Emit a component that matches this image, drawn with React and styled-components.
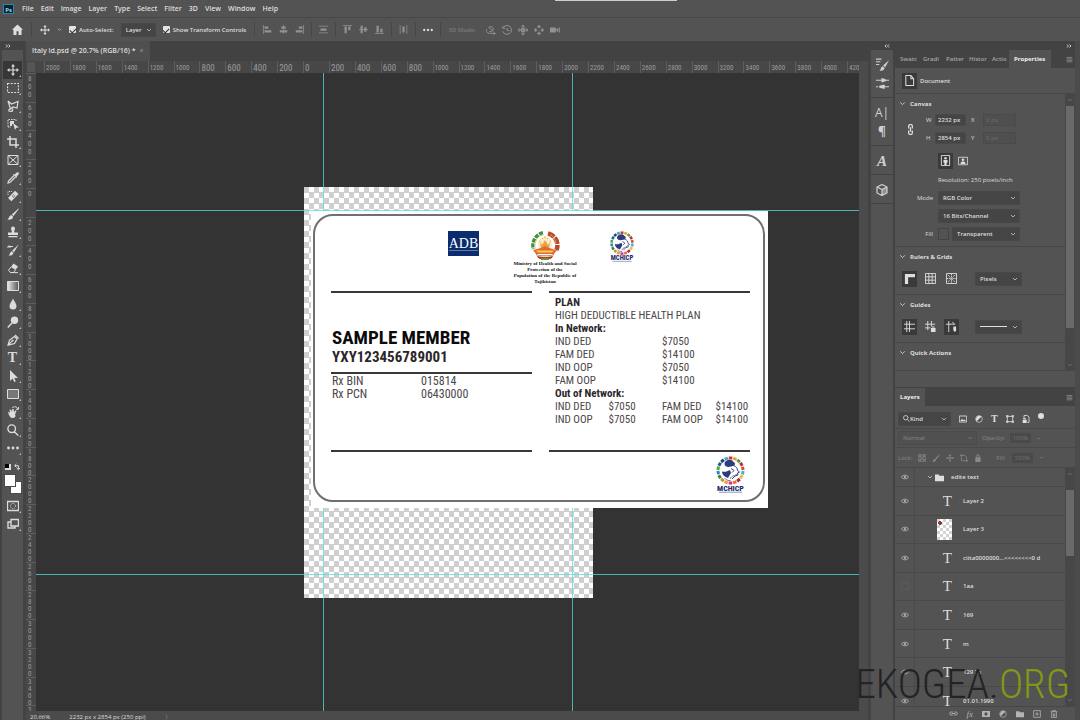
import React from 'react';
import styled, { createGlobalStyle } from 'styled-components';

const ui = '"Open Sans", "Noto Sans", sans-serif';
const narrow = '"Roboto Condensed", "Liberation Sans Narrow", "Liberation Sans", sans-serif';

const GlobalStyle = createGlobalStyle`
  * { box-sizing: border-box; }
  body {
    margin: 0;
    background: #535353;
    color: #dedede;
    font-family: ${ui};
    font-size: 7px;
    line-height: 10px;
  }
  button, input, select { font: inherit; color: inherit; margin: 0; padding: 0; border: 0; background: none; }
`;

/* ---------- icons ---------- */

const stroke = { fill: 'none', stroke: 'currentColor', strokeWidth: 1 };

const shapes = {
  home: <path d="M6 .5 0 6.2h1.6V12h3.3V8h2.2v4h3.3V6.2H12z" fill="currentColor" />,
  move: <path d="M6 0 8 2.5H6.6v2.9h2.9V4L12 6 9.5 8V6.6H6.6v2.9H8L6 12 4 9.500h1.400V6.600H2.500V8L0 6l2.500-2v1.400h2.900V2.500H4z" fill="currentColor" />,
  chevron: <path d="M2 4l4 4 4-4" {...stroke} strokeWidth="1.4" />,
  marquee: <path d="M.5 1.500h11v9H.5z" {...stroke} strokeWidth="1.200" strokeDasharray="2 1.200" />,
  lasso: <path d="M1 1l3.500 3L11 1.500 10 8 6 7 3.500 9 1 1m2.500 8L2 9.500 2 11l3 .5 1-3" {...stroke} strokeWidth="1.200" />,
  objectSelect: <g><path d="M1 8.500V1.500h8V4M1 9h3" {...stroke} strokeDasharray="1.500 1" /><path d="M3 3h4v3H5v2H3zM6 5l6 4.500-2.800.3L8 12z" fill="currentColor" /></g>,
  crop: <path d="M3 0v9h9M0 3h9v9" {...stroke} strokeWidth="1.500" />,
  frame: <path d="M1 1.500h10v9H1zM1 1.500l10 9M11 1.500l-10 9" {...stroke} />,
  pipette: <g><path d="M7 3.500 1.500 9 1 11l2-.5L8.500 5" {...stroke} strokeWidth="1.200" /><path d="M6 2.500 7 2l1 .5C9 .5 10.500-.2 11.500.6c.9 1 .2 2.400-1.800 3.400l.4 1-.6.8z" fill="currentColor" /></g>,
  heal: <g><path d="M8 .8 11.500 4 4.500 11.300 1 8z" fill="currentColor" /><path d="M1 5V1.500h4" {...stroke} strokeDasharray="1.200 1" /><path d="M5 6h.9M6.300 5h.9M6 7.200h.9M7.300 6.200h.9" stroke="#535353" /></g>,
  brush: <path d="M11.800.2 11.800 1 6.500 8 4.800 6.500zM4.200 7l2 1.700C6 11 3.500 12 .3 11.500 2.200 10.500 1.800 8 4.200 7z" fill="currentColor" />,
  stamp: <path d="M4 2.500a2 2 0 0 1 4 0C8 4 7 4.500 7.200 6.500H11V9H1V6.500h3.800C5 4.500 4 4 4 2.500zM1.500 10h9v1.300h-9z" fill="currentColor" />,
  history: <g><path d="M11.800.2 7 8.300 5.200 6.800zM4.700 7.200l1.800 1.600C6 11 4 12 1.500 11.300c2-1 1-3 3.200-4.100z" fill="currentColor" /><path d="M.5 3.500 2 2l1.500 1.500M2 2.500h4" {...stroke} strokeWidth="1.200" /></g>,
  eraser: <g><path d="M6.500 1.500 11 4.500 8.500 8 4 5z" fill="currentColor" /><path d="M4 5 1.500 8.200 3.500 10.500h3L8.500 8M3 10.600h8" {...stroke} /></g>,
  gradient: <g><linearGradient id="toolGradient"><stop stopColor="#ededed" /><stop offset="1" stopColor="#555" /></linearGradient><path d="M.5 1.500h11v9H.5z" fill="url(#toolGradient)" stroke="currentColor" /></g>,
  drop: <path d="M6 .5C7 3 9.500 5.500 9.500 8a3.500 3.500 0 0 1-7 0C2.500 5.500 5 3 6 .5z" fill="currentColor" />,
  dodge: <g><circle cx="7.500" cy="4.300" r="3.700" fill="currentColor" /><path d="M5 7 .8 11.400" {...stroke} strokeWidth="1.500" /></g>,
  pen: <g><path d="M1 11.200 2.500 6 7.500 2.500 10 5 7.500 9.500zM1 11.200l4-4" {...stroke} strokeWidth="1.200" /><circle cx="5.700" cy="6.500" r="1" fill="currentColor" /><path d="M8 1l3.500 3.500" {...stroke} strokeWidth="1.500" /></g>,
  pointer: <path d="M3 0v11l2.600-2.500L7.200 12l1.600-.8L7.300 8H11z" fill="currentColor" />,
  rect: <path d="M.5 1.500h11v9H.5z" stroke="currentColor" fill="#777" />,
  hand: <g><path d="M1 6 3 6.500 2.500 4l1.500-.5 1 2.500.3-3 1.500.2.200 3 1.500-2 1 .8-1.500 3.500C9.500 10.500 7.500 12 5.500 12S2 10 1 6z" fill="currentColor" /><path d="M5 2C7 0 10 .5 11 3M11.500 1v2.300H9" {...stroke} /></g>,
  zoom: <path d="M8.500 4.700a3.800 3.800 0 1 1-7.600 0 3.800 3.800 0 0 1 7.600 0zM7.300 7.700 11.300 11.500" {...stroke} strokeWidth="1.400" />,
  dots: <g fill="currentColor"><circle cx="1.500" cy="6" r="1.400" /><circle cx="6" cy="6" r="1.400" /><circle cx="10.500" cy="6" r="1.400" /></g>,
  quickMask: <g><path d="M.5 1.500h11v9H.5z" {...stroke} strokeWidth="1.300" /><circle cx="6" cy="6" r="2.500" {...stroke} strokeDasharray="1 1" /></g>,
  screen: <path d="M4 1.500h7.500V8H4zM4 4H1v6h7V8" {...stroke} strokeWidth="1.400" />,
  alignLeft: <path d="M0 0h1v12H0zM2 2h5v3H2zM2 7h9v3H2z" fill="currentColor" />,
  alignCenter: <path d="M5.500 0h1v12h-1zM3 2h6v3H3zM1 7h10v3H1z" fill="currentColor" />,
  alignRight: <path d="M11 0h1v12h-1zM5 2h5v3H5zM1 7h9v3H1z" fill="currentColor" />,
  distribute: <path d="M0 1h12v1H0zM2 4.500h8v3H2zM0 10h12v1H0z" fill="currentColor" />,
  alignTop: <path d="M0 0h12v1H0zM2 2h3v9H2zM7 2h3v5H7z" fill="currentColor" />,
  alignMiddle: <path d="M0 5.500h12v1H0zM2 1h3v10H2zM7 3h3v6H7z" fill="currentColor" />,
  alignBottom: <path d="M0 11h12v1H0zM2 1h3v9H2zM7 5h3v5H7z" fill="currentColor" />,
  distributeH: <path d="M1 0h1v12H1zM4.500 2h3v8h-3zM10 0h1v12h-1z" fill="currentColor" />,
  orbit: <path d="M3 4a3 3 0 1 1 5 3L4 8M1 5c-2 3 1 5 4 5h6M9 8l2 2-2 2M4 3l4 4" {...stroke} strokeWidth="1.200" />,
  roll: <path d="M2 2.500a5.300 5.300 0 1 1-1 5M1 1v3h3M6 3.500v3h3" {...stroke} strokeWidth="1.200" />,
  pan: <path d="M6 0v12M0 6h12M4 2l2-2 2 2M4 10l2 2 2-2M2 4 0 6l2 2M10 4l2 2-2 2M4 4h4v4H4z" {...stroke} strokeWidth="1.200" />,
  slide: <path d="M6 4V0M6 12V8M0 6h4M8 6h4M4 2h4M4 10h4M2 4v4M10 4v4" {...stroke} strokeWidth="1.500" />,
  camera: <path d="M0 3h7v6H0zM7 6l3-3v6zM11 3h1v6h-1z" fill="currentColor" />,
  brushes: <g><path d="M0 1h5M0 3.500h4M0 6h3" {...stroke} /><path d="M12 2 8.500 8.500 6.500 7zM6 7.500 8 9c-.5 2.500-2 3-5 2.500C5 10.500 4 8.500 6 7.500z" fill="currentColor" /></g>,
  brushSettings: <path d="M0 2.500h5V1l4 1v2L5 5V3.500H0zM9 2.500h3v1H9zM12 8.500H8V7L3 8v2l5 1V9.500h4zM0 8.500h2v1H0z" fill="currentColor" />,
  cube: <g><path d="M6 .5 11 3v6L6 11.500 1 9V3zM1 3l5 2.500L11 3M6 5.500v6" {...stroke} strokeWidth="1.200" /><path d="M6 5.500 11 3v6l-5 2.500z" fill="currentColor" opacity=".5" /></g>,
  page: <path d="M2 .5h5.500L10.500 4v7.500H2zM7.500.5V4h3" {...stroke} strokeWidth="1.100" />,
  link: <path d="M4 5V2.500a2 2 0 0 1 4 0V5M4 7v2.500a2 2 0 0 0 4 0V7M6 3.500v5" {...stroke} strokeWidth="1.400" />,
  portrait: <g><path d="M1.500.5h9v11h-9z" {...stroke} /><circle cx="6" cy="3.500" r="1.400" fill="currentColor" /><path d="M3.800 5.500h4.400v3H7.200V11H4.800V8.500h-1z" fill="currentColor" /></g>,
  landscape: <g><path d="M.5 1.500h11v9H.5z" {...stroke} /><circle cx="6" cy="4.500" r="1.600" fill="currentColor" /><path d="M3 9.500C3 7 4.500 6.500 6 6.500s3 .5 3 3z" fill="currentColor" /></g>,
  ruler: <path d="M1 1h11v3.500H4.500V12H1z" fill="currentColor" />,
  grid: <path d="M.5.5h11v11H.5zM4.200.5v11M7.800.5v11M.5 4.200h11M.5 7.800h11" {...stroke} />,
  pixelGrid: <g><path d="M.5.5h11v11H.5z" {...stroke} /><path d="M2 2l8 8M10 2 2 10M6 1v10M1 6h10" {...stroke} strokeDasharray="1.500 .8" /></g>,
  guides: <path d="M3 0v12M6 0v12M0 3.500h12M0 8.500h12" {...stroke} />,
  guideLock: <g><path d="M3 0v10M7 0v6M0 3.500h11M0 7.500h6" {...stroke} /><path d="M6.500 7.500h5V12h-5zM7.500 7V6h3v1z" fill="currentColor" /></g>,
  guideSmart: <g><path d="M3 0v12M0 3.500h10M7 1l2 2.500" {...stroke} /><path d="M8 6h3v5l-1.500 1L8 10z" fill="currentColor" /></g>,
  image: <g><path d="M.5 1.500h11v9H.5z" {...stroke} strokeWidth="1.300" /><path d="M2 9l2.500-3.500L6.500 8 8 6.500 10 9z" fill="currentColor" /></g>,
  adjust: <g><circle cx="6" cy="6" r="5" {...stroke} /><path d="M9.500 2.500A5 5 0 0 0 2.500 9.500z" fill="currentColor" /></g>,
  shape: <path d="M2 2h8v8H2zM.5.5h2.500V3H.5zM9 .5h2.500V3H9zM.5 9h2.500v2.500H.5zM9 9h2.500v2.500H9z" {...stroke} strokeWidth="1.200" />,
  smart: <g><path d="M3 6V.8h5L10.500 3v8H8" {...stroke} strokeWidth="1.300" /><path d="M1 7h6v5H1zM2 6.500V5h4v1.500z" fill="currentColor" /></g>,
  checker: <g><path d="M.5.5h11v11H.5z" {...stroke} /><path d="M2 2h2.700v2.700H2zM7 2h3v2.700H7zM4.700 4.700H7V7H4.700zM2 7h2.700v3H2zM7 7h3v3H7z" fill="currentColor" /></g>,
  artboard: <path d="M2 0v10h10M0 2h7l3 3v7" {...stroke} strokeWidth="1.200" />,
  lock: <path d="M2 5h1.500V3a2.500 2.500 0 0 1 5 0v2H10v7H2zM4.800 5h2.400V3a1.200 1.200 0 0 0-2.400 0z" fill="currentColor" />,
  eye: <g><path d="M.5 6C3 2.300 9 2.300 11.500 6 9 9.700 3 9.700.5 6z" {...stroke} strokeWidth="1.400" /><circle cx="6" cy="6" r="1.800" fill="currentColor" /></g>,
  eyeOff: <path d="M.5.5h11v11H.5z" {...stroke} opacity=".2" />,
  folder: <path d="M0 2h5l1 1.500h6V11H0z" fill="currentColor" />,
  menu: <path d="M1 2.500h10M1 5h10M1 7.500h10M1 10h10" {...stroke} />,
  mask: <g><path d="M0 1.500h12v9H0z" fill="currentColor" /><circle cx="6" cy="6" r="2.500" fill="#535353" /></g>,
  add: <path d="M1 1h10v10H1zM6 3.500v5M3.500 6h5" {...stroke} strokeWidth="1.200" />,
  trash: <path d="M1 2.500h10M4 2.500V1h4v1.500M2.500 3v8.500h7V3M5 5v5M7 5v5" {...stroke} strokeWidth="1.200" />,
  chain: <path d="M5 8H3a2 2 0 0 1 0-4h2M7 4h2a2 2 0 0 1 0 4H7M3.500 6h5" {...stroke} strokeWidth="1.200" />,
  swap: <path d="M3 4h5v5M5 1.500 2.500 4 5 6.500M5.500 7.500 8 10l2.500-2.500" {...stroke} strokeWidth="1.500" />,
  collapse: <path d="M5 3 2 6l3 3M10 3 7 6l3 3" {...stroke} strokeWidth="1.800" />,
  expand: <path d="M2 3l3 3-3 3M7 3l3 3-3 3" {...stroke} strokeWidth="1.800" />,
};

const Svg = styled.svg`
  display: block;
  flex: none;
  width: ${(p) => p.$size}px;
  height: ${(p) => p.$size}px;
`;

const Icon = ({ name, size = 10 }) => (
  <Svg $size={size} viewBox="0 0 12 12" aria-hidden="true">{shapes[name]}</Svg>
);

const Glyph = styled.span`
  font-family: ${(p) => (p.$sans ? ui : '"Liberation Serif", serif')};
  font-style: ${(p) => (p.$italic ? 'italic' : 'normal')};
  font-weight: ${(p) => (p.$bold ? 700 : 400)};
  font-size: ${(p) => p.$size || 14}px;
  line-height: 14px;
`;

/* ---------- frame of the program ---------- */

const Page = styled.div`
  position: relative;
  display: flex;
  flex-direction: column;
  height: 100vh;
  overflow: hidden;
  background: #535353;
`;

const MenuBar = styled.nav`
  display: flex;
  align-items: center;
  gap: 7px;
  height: 18px;
  padding: 0 3px;
  border-bottom: 1px solid #474747;
`;

const MenuItem = styled.button`
  font-size: 7px;
  font-weight: 600;
`;

const PsBadge = styled.span`
  display: grid;
  place-items: center;
  width: 11px;
  height: 10px;
  margin-right: 1px;
  border: 1px solid #2f86ad;
  background: #07202e;
  color: #9bd8f5;
  font-size: 6px;
  font-weight: 700;
`;

const DragHandle = styled.div`
  position: absolute;
  top: 0;
  left: 555px;
  width: 122px;
  height: 1px;
  background: #c8d0cf;
`;

const OptionsBar = styled.div`
  display: flex;
  align-items: center;
  gap: 7px;
  height: 23px;
  padding-left: 12px;
`;

const Group = styled.div`
  display: flex;
  align-items: center;
  gap: ${(p) => p.$gap || 6}px;
  color: ${(p) => (p.$dim ? '#929292' : 'inherit')};
`;

const ModeLabel = styled.span`
  margin-right: 4px;
  color: #7a7a7a;
  font-size: 6px;
  font-weight: 600;
`;

const Divider = styled.i`
  width: 1px;
  height: 15px;
  margin: 0 ${(p) => p.$space || 0}px;
  background: #474747;
`;

const Check = styled.label`
  display: flex;
  align-items: center;
  gap: 3px;
  font-size: 6px;
  font-weight: 600;
  white-space: nowrap;

  input {
    appearance: none;
    display: grid;
    place-items: center;
    width: 7px;
    height: 7px;
    border-radius: 1px;
    background: #e4e4e4;
  }
  input:checked::after {
    content: '';
    width: 5px;
    height: 3px;
    border: solid #333;
    border-width: 0 0 1px 1px;
    transform: rotate(-45deg);
  }
`;

const SelectBox = styled.span`
  display: inline-flex;
  align-items: center;
  width: ${(p) => p.$width}px;
  height: 14px;
  padding: 0 3px 0 4px;
  border: 1px solid ${(p) => (p.$dim ? '#4c4c4c' : '#484848')};
  background: ${(p) => (p.$dim ? '#505050' : '#454545')};
  color: ${(p) => (p.$dim ? '#7c7c7c' : '#dedede')};
  font-size: 6px;
  font-weight: 600;

  select {
    appearance: none;
    flex: 1;
    min-width: 0;
    line-height: 10px;
    outline: 0;
  }
`;

const Select = ({ label, value, width, dim, before, id }) => (
  <SelectBox $width={width} $dim={dim}>
    {before}
    <select aria-label={label} id={id} defaultValue={value}>
      <option>{value}</option>
    </select>
    <Icon name="chevron" size={6} />
  </SelectBox>
);

const Main = styled.div`
  display: grid;
  grid-template-columns: 26px minmax(0, 1fr) 24px 185px;
  flex: 1;
  min-height: 0;
`;

/* ---------- tools ---------- */

const Tools = styled.aside`
  display: flex;
  flex-direction: column;
  align-items: center;
  border: solid #434343;
  border-width: 0 3px 0 2px;
  color: #dcdcdc;
`;

const PanelCap = styled.div`
  display: flex;
  align-items: center;
  align-self: stretch;
  justify-content: ${(p) => p.$align || 'flex-start'};
  height: 9px;
  padding: 0 3px;
  background: #424242;
`;

const ToolList = styled.div`
  display: grid;
  grid-auto-rows: 18px;
  padding-top: 11px;
`;

const Tool = styled.button`
  position: relative;
  display: grid;
  place-items: center;
  width: 19px;
  min-height: 18px;
  background: ${(p) => (p.$active ? '#373737' : 'transparent')};

  &::after {
    content: '';
    position: absolute;
    right: 1px;
    bottom: 2px;
    border: 1px solid;
    border-color: transparent #bbb #bbb transparent;
  }
`;

const Swatches = styled.div`
  display: grid;
  grid-template-columns: 9px 9px;
  place-items: center;
  row-gap: 3px;
  padding: 6px 0 3px;
`;

const SwatchPair = styled.div`
  position: relative;
  grid-column: span 2;
  width: 18px;
  height: 20px;
`;

const Swatch = styled.button`
  position: absolute;
  top: ${(p) => (p.$back ? 7 : 0)}px;
  left: ${(p) => (p.$back ? 6 : 0)}px;
  width: 12px;
  height: 13px;
  border: 1px solid #4b4b4b;
  background: #fff;
`;

const MiniSwatch = styled.i`
  width: 6px;
  height: 6px;
  border: solid #ddd;
  border-width: 0 2px 2px 0;
  background: #000;
`;

const tools = [
  'move', 'marquee', 'lasso', 'objectSelect', 'crop', 'frame', 'pipette', 'heal', 'brush', 'stamp', 'history',
  'eraser', 'gradient', 'drop', 'dodge', 'pen', 'type', 'pointer', 'rect', 'hand', 'zoom', 'dots',
];

const ToolBar = () => (
  <Tools>
    <PanelCap><Icon name="expand" size={6} /></PanelCap>
    <ToolList>
      {tools.map((name) => (
        <Tool key={name} aria-label={name} $active={name === 'move'}>
          {name === 'type' ? <Glyph $bold>T</Glyph> : <Icon name={name} size={12} />}
        </Tool>
      ))}
    </ToolList>
    <Swatches>
      <MiniSwatch />
      <Icon name="swap" size={8} />
      <SwatchPair>
        <Swatch $back aria-label="Background colour" />
        <Swatch aria-label="Foreground colour" />
      </SwatchPair>
    </Swatches>
    <Tool aria-label="Quick mask"><Icon name="quickMask" size={12} /></Tool>
    <Tool aria-label="Screen mode"><Icon name="screen" size={12} /></Tool>
  </Tools>
);

/* ---------- document window ---------- */

const DocumentArea = styled.main`
  display: flex;
  flex-direction: column;
  min-width: 0;
  min-height: 0;
  border-right: 3px solid #434343;
  background: #4b4b4b;
`;

const TabBar = styled.div`
  display: flex;
  height: 20px;
  background: #424242;
`;

const DocTab = styled.button`
  display: flex;
  align-items: center;
  gap: 4px;
  padding: 0 6px;
  background: #4f4f4f;
  font-size: 7px;
  font-weight: 600;
  white-space: nowrap;

  span { color: #8d8d8d; }
`;

const Workspace = styled.div`
  display: grid;
  grid-template: 12px minmax(0, 1fr) / 10px minmax(0, 1fr) 9px;
  flex: 1;
  min-height: 0;
`;

const RulerCorner = styled.div`
  border: 1px solid #444;
  background: #555;
`;

const RulerX = styled.div`
  overflow: hidden;
  padding-left: 8px;
  background: #474747;
`;

const RulerXTrack = styled.div`
  display: grid;
  grid-template-columns: repeat(32, 1fr);
  height: 12px;
  margin-right: -14px;
`;

const MarkX = styled.span`
  min-width: 0;
  padding: 2px 0 0 1px;
  border-left: 1px solid #5d5d5d;
  color: #9c9c9c;
  font-family: ${narrow};
  font-size: ${(p) => (p.$wide ? 7 : 9)}px;
`;

const RulerY = styled.div`
  overflow: hidden;
  background: #474747;
`;

const RulerYTrack = styled.div`
  display: grid;
  grid-template-rows: repeat(23, 1fr);
  height: calc(100% + 23px);
`;

const MarkY = styled.span`
  min-height: 0;
  padding: 1px 5px 0 2px;
  border-top: 1px solid #5d5d5d;
  color: #9c9c9c;
  font-family: ${narrow};
  font-size: 7px;
  line-height: ${(p) => (p.$wide ? 7 : 8)}px;
  word-break: break-all;
`;

const Canvas = styled.div`
  position: relative;
  overflow: hidden;
  background: #333;
`;

const Artboard = styled.div`
  position: absolute;
  left: 268px;
  top: 114px;
  width: 289px;
  height: 411px;
  background: repeating-conic-gradient(#fff 0 25%, #cfcfcf 0 50%) 0 0 / 10px 11px;
`;

const GuideV = styled.i`
  position: absolute;
  top: 0;
  bottom: 0;
  left: ${(p) => p.$at}px;
  width: 1px;
  background: rgba(80, 226, 222, 0.75);
`;

const GuideH = styled.i`
  position: absolute;
  left: 0;
  right: 0;
  top: ${(p) => p.$at}px;
  height: 1px;
  background: rgba(80, 226, 222, 0.75);
`;

const StatusBar = styled.footer`
  display: flex;
  gap: 19px;
  height: 9px;
  padding: 1px 4px 0;
  overflow: hidden;
  background: #4b4b4b;
  font-size: 6px;
  white-space: nowrap;
`;

const marksX = Array.from({ length: 32 }, (_, i) => Math.abs(i - 10) * 200);
const marksY = Array.from({ length: 23 }, (_, i) => Math.abs(i - 4) * 200);

/* ---------- the member card ---------- */

const CardSheet = styled.article`
  position: absolute;
  left: 275px;
  top: 138px;
  width: 457px;
  padding: 3px 3px 6px 2px;
  background: #fff;
  color: #2b2629;
  font-family: ${narrow};
`;

const CardFrame = styled.div`
  display: flex;
  flex-direction: column;
  min-height: 288px;
  padding: 0 13px 0 16px;
  border: 2px solid #6f6f6f;
  border-radius: 20px;
`;

const LogoRow = styled.header`
  display: flex;
  align-items: flex-start;
  height: 75px;
  padding: 15px 0 0 117px;
`;

const Ministry = styled.div`
  display: flex;
  flex-direction: column;
  align-items: center;
  width: 68px;
  margin: 0 30px 0 32px;
  color: #111;
  font-family: "Liberation Serif", serif;
  font-size: 5px;
  font-weight: 700;
  line-height: 6px;
  text-align: center;
  white-space: nowrap;

  p { margin: 0; }
`;

const Logo = styled.svg`
  display: block;
  width: ${(p) => p.$width}px;
  height: ${(p) => p.$height}px;
`;

const CardColumns = styled.div`
  display: grid;
  grid-template-columns: repeat(2, minmax(0, 1fr));
  gap: 17px;
`;

const CardColumn = styled.section`
  height: 161px;
  border: solid #3b383a;
  border-width: 2px 0;
`;

const MemberBox = styled.div`
  height: 81px;
  padding: 35px 0 0 1px;
  border-bottom: 2px solid #3b383a;
`;

const MemberName = styled.h2`
  margin: 0;
  color: #0c0a0b;
  font-size: 19px;
  line-height: 20px;
`;

const MemberId = styled.p`
  margin: 0;
  font-size: 15px;
  font-weight: 700;
  line-height: 18px;
`;

const RxBox = styled.div`
  padding: 1px 0 0 1px;
  font-size: 12px;
`;

const DataTable = styled.table`
  width: ${(p) => p.$width}px;
  border-collapse: collapse;
  table-layout: fixed;
  color: #4b474a;
  font-size: inherit;
  line-height: 13px;

  th, td {
    padding: 0;
    font-weight: 400;
    text-align: left;
    white-space: nowrap;
  }
`;

const PlanBox = styled.div`
  padding: 3px 0 0 6px;
  color: #4b474a;
  font-size: 11px;
  line-height: 13px;

  h3 { margin: 0; color: #2b2629; font-size: 11px; line-height: 13px; }
  p { margin: 0; white-space: nowrap; }
`;

const CardFoot = styled.footer`
  display: flex;
  justify-content: flex-end;
  padding: 4px 4px 0;
`;

const Table = ({ rows, width }) => (
  <DataTable $width={width}>
    <tbody>
      {rows.map((row) => (
        <tr key={row[0]}>
          {row.map((cell, i) => (i % 2 ? <td key={i}>{cell}</td> : <th key={i} scope="row">{cell}</th>))}
        </tr>
      ))}
    </tbody>
  </DataTable>
);

const AdbLogo = () => (
  <Logo $width={31} $height={25} viewBox="0 0 31 25" role="img" aria-label="ADB">
    <rect width="31" height="25" fill="#0c2d6d" />
    <text x="15.500" y="17" fill="#fff" fontFamily="Liberation Serif, serif" fontSize="14" textAnchor="middle">ADB</text>
    <path d="M1 19.500h29" stroke="#9fb0d2" strokeWidth=".6" />
  </Logo>
);

const Emblem = () => (
  <Logo $width={30} $height={30} viewBox="0 0 30 30" aria-hidden="true">
    <path d="M13 2A12 13 0 0 0 3.500 18" fill="none" stroke="#3f9142" strokeWidth="4" strokeDasharray="4 1" />
    <path d="M13 3.500A12 12 0 0 0 5 18" fill="none" stroke="#ead9a0" strokeWidth="1" />
    <path d="M18 2.500A12 12 0 0 1 26.500 19" fill="none" stroke="#b8482a" strokeWidth="4.500" strokeDasharray="7 1" />
    <path d="M20 3.500A11 11 0 0 1 26 13" fill="none" stroke="#dd9b4b" strokeWidth="1" />
    <circle cx="15" cy="13" r="7" fill="#faecc0" />
    <path d="M10 11l2 3 3-5 3 5 2-3-1 6h-8z" fill="#e9a24c" />
    <path d="M12 7l1 1M15 5v2M18 7l-1 1M9 10l1 .5M21 10l-1 .5" stroke="#e5a52a" />
    <path d="M3 19c4-1 6-1 12-4 6 3 8 3 12 4l-3 4H6z" fill="#e26a2c" />
    <path d="M6 19.500h18l-2 2H8z" fill="#f1cd59" />
    <path d="M6 23c5 2 13 2 18 0l-2 4c-4 2-10 2-14 0z" fill="#a83a23" />
    <path d="M7 24.500c5 1.500 11 1.500 16 0" fill="none" stroke="#eed9b0" />
    <path d="M11 27h8v2h-8z" fill="#6b943c" />
  </Logo>
);

const wheel = ['#c93a35', '#ef9a36', '#4f9f46', '#c5263a', '#e5452b', '#37b4dc', '#f2bb2c', '#a8243f', '#ee6c2c', '#de2f86', '#f39c2e', '#c4923a', '#3f7f49', '#2686bd', '#57a447', '#17608f', '#1c4770', '#4aa4c9'];

const ChildLogo = ({ width, height }) => (
  <Logo $width={width} $height={height} viewBox="0 0 31 37" role="img" aria-label="MCHICP">
    {wheel.map((fill, i) => (
      <rect key={i} x="13.800" y=".5" width="3.500" height="3" fill={fill} transform={`rotate(${i * 20} 15.500 14.500)`} />
    ))}
    <path d="M9.500 8c0-4 7-6 9-2 2 .5 2 3 0 4l-5 1c-2-.2-4-1-4-3z" fill="#2f3b7f" />
    <path d="M7 15.500c2 .5 4 .5 8-1.500l1 3-3 5c-3-1-6-3-6-6.500z" fill="#2f3b7f" />
    <path d="M18.500 9.500c3 1 4 3 4 5l2 1.500-2 1 .5 2-3 1-3 3M16 12.500l3 2-2 2" fill="none" stroke="#34407f" strokeWidth="1" />
    <path d="M15 23c2-4 5-3 7-5M9.500 22c1.500 2 4 3 6 2.500" fill="none" stroke="#5a649a" strokeWidth=".9" />
    <text x="15.500" y="34.500" fill="#1e2b6d" fontFamily="Roboto Condensed, Liberation Sans, sans-serif" fontSize="8" fontWeight="800" textAnchor="middle">MCHICP</text>
    <path d="M4 36.200h23" stroke="#5a649a" strokeWidth=".7" />
  </Logo>
);

const MemberCard = () => (
  <CardSheet>
    <CardFrame>
      <LogoRow>
        <AdbLogo />
        <Ministry>
          <Emblem />
          <p>
            Ministry of Health and Social<br />
            Protection of the<br />
            Population of the Republic of<br />
            Tajikistan
          </p>
        </Ministry>
        <ChildLogo width={26} height={31} />
      </LogoRow>
      <CardColumns>
        <CardColumn>
          <MemberBox>
            <MemberName>SAMPLE MEMBER</MemberName>
            <MemberId>YXY123456789001</MemberId>
          </MemberBox>
          <RxBox>
            <Table width={178} rows={[['Rx BIN', '015814'], ['Rx PCN', '06430000']]} />
          </RxBox>
        </CardColumn>
        <CardColumn>
          <PlanBox>
            <h3>PLAN</h3>
            <p>HIGH DEDUCTIBLE HEALTH PLAN</p>
            <h3>In Network:</h3>
            <Table
              width={214}
              rows={[['IND DED', '$7050'], ['FAM DED', '$14100'], ['IND OOP', '$7050'], ['FAM OOP', '$14100']]}
            />
            <h3>Out of Network:</h3>
            <Table
              width={214}
              rows={[['IND DED', '$7050', 'FAM DED', '$14100'], ['IND OOP', '$7050', 'FAM OOP', '$14100']]}
            />
          </PlanBox>
        </CardColumn>
      </CardColumns>
      <CardFoot><ChildLogo width={31} height={37} /></CardFoot>
    </CardFrame>
  </CardSheet>
);

/* ---------- right side ---------- */

const Dock = styled.aside`
  display: flex;
  flex-direction: column;
  border-right: 2px solid #434343;
`;

const DockGroup = styled.div`
  display: grid;
  grid-auto-rows: 19px;
  place-items: center;
  padding: 5px 0 4px;
  border-bottom: 1px solid #434343;
  color: #d0d0d0;
`;

const Panels = styled.aside`
  display: flex;
  flex-direction: column;
  min-height: 0;
  border-right: 5px solid #4b4b4b;
`;

const PanelTabs = styled.div`
  display: flex;
  align-items: stretch;
  height: 18px;
  padding-right: 2px;
  background: #434343;
  color: #a5a5a5;
  font-size: 6px;
  font-weight: 600;

  svg { margin: auto 0 auto auto; }
`;

const PanelTab = styled.button`
  overflow: hidden;
  width: ${(p) => p.$width}px;
  padding: 0 5px;
  background: ${(p) => (p.$active ? '#535353' : 'transparent')};
  color: ${(p) => (p.$active ? '#f0f0f0' : 'inherit')};
  font-weight: ${(p) => (p.$active ? 700 : 600)};
  text-align: left;
`;

const DocumentRow = styled.div`
  display: flex;
  align-items: center;
  gap: 3px;
  height: 26px;
  padding-left: 7px;
  border-bottom: 1px solid #464646;
  font-size: 6px;
  font-weight: 600;
`;

const ToggleButton = styled.button`
  display: grid;
  place-items: center;
  width: 15px;
  height: 16px;
  background: ${(p) => (p.$on ? '#3a3a3a' : 'transparent')};
`;

const Scroller = styled.div`
  display: grid;
  grid-template-columns: minmax(0, 1fr) 10px;
  flex: ${(p) => (p.$grow ? '1' : 'none')};
  min-height: 0;
`;

const ScrollBar = styled.div`
  display: flex;
  flex-direction: column;
  align-items: center;
  justify-content: space-between;
  padding: 3px 1px;
  background: #474747;
  color: #777;

  i {
    width: 8px;
    height: ${(p) => p.$thumb}px;
    margin: ${(p) => p.$gap}px 0 auto;
    background: #6a6a6a;
  }
  svg:first-child { transform: rotate(180deg); }
`;

const Bar = ({ thumb, gap }) => (
  <ScrollBar $thumb={thumb} $gap={gap}>
    <Icon name="chevron" size={6} />
    <i />
    <Icon name="chevron" size={6} />
  </ScrollBar>
);

const Section = styled.section`
  padding: 3px 0 ${(p) => p.$bottom || 0}px 4px;
  border-bottom: 1px solid #464646;
`;

const SectionTitle = styled.h3`
  display: flex;
  align-items: center;
  gap: 4px;
  height: 13px;
  margin: 0;
  font-size: 6px;
  font-weight: 700;
`;

const SizeGrid = styled.div`
  display: grid;
  grid-template-columns: 22px 14px 31px 17px 33px;
  grid-auto-rows: 18px;
  align-items: center;
  padding-top: 1px;
  font-size: 6px;

  label { padding-left: 5px; }
`;

const LinkCell = styled.button`
  grid-row: span 2;
  display: grid;
  place-items: center;
`;

const Field = styled.input`
  && {
    width: 100%;
    height: 12px;
    padding: 0 2px;
    border: 1px solid #4a4a4a;
    background: ${(p) => (p.disabled ? '#4f4f4f' : '#454545')};
    color: ${(p) => (p.disabled ? '#666' : '#dedede')};
    font-size: 6px;
    font-weight: 600;
  }
`;

const FormLine = styled.div`
  display: grid;
  grid-template-columns: 34px 1fr;
  align-items: center;
  gap: 5px;
  height: ${(p) => (p.$tall ? 27 : 18)}px;
  font-size: 6px;

  > label { text-align: right; }
`;

const Resolution = styled.p`
  margin: 0 0 3px 39px;
  font-size: 6px;
  line-height: 12px;
`;

const ButtonLine = styled.div`
  display: flex;
  align-items: center;
  gap: 6px;
  height: 31px;
  padding-left: 3px;

  > span { margin-left: 10px; }
`;

const FillBox = styled.i`
  width: 11px;
  height: 12px;
  border: 1px solid #444;
`;

const LinePreview = styled.i`
  width: 27px;
  height: 1px;
  background: #dedede;
`;

const LayersPanel = styled.section`
  display: flex;
  flex-direction: column;
  flex: 1;
  min-height: 0;
  margin-top: 16px;
  border-top: 1px solid #434343;
`;

const LayerLine = styled.div`
  display: flex;
  align-items: center;
  gap: ${(p) => p.$gap}px;
  height: ${(p) => p.$height}px;
  padding: ${(p) => p.$top || 0}px 0 0 3px;
  border-bottom: 1px solid #494949;
  color: ${(p) => (p.$dim ? '#898989' : '#dedede')};
  font-size: 6px;
`;

const Percent = styled.input`
  && {
    width: 21px;
    height: 10px;
    background: #4a4a4a;
    color: #747474;
    text-align: center;
  }
`;

const FillLabel = styled.label`
  margin-left: 8px;
`;

const FilterSwitch = styled.button`
  && {
    width: 6px;
    height: 6px;
    margin-bottom: 6px;
    border-radius: 50%;
    background: #dedede;
  }
`;

const LayerList = styled.ul`
  display: grid;
  grid-template-rows: 19px;
  grid-auto-rows: 12%;
  min-height: 0;
  margin: 0;
  padding: 0;
  overflow: hidden;
  list-style: none;
`;

const LayerRow = styled.li`
  display: grid;
  grid-template-columns: 20px ${(p) => (p.$group ? '32px' : '46px')} 1fr;
  align-items: center;
  border-bottom: 1px solid #494949;
  font-size: 6px;
  font-weight: 600;
  white-space: nowrap;
`;

const EyeCell = styled.button`
  display: grid;
  place-items: center;
  align-self: stretch;
  color: #a6a6a6;
  box-shadow: inset -1px 0 #4a4a4a;
`;

const ThumbCell = styled.span`
  display: flex;
  align-items: center;
  justify-content: flex-end;
  gap: 2px;
  padding-right: ${(p) => (p.$group ? 3 : 9)}px;
`;

const Thumb = styled.i`
  width: 15px;
  height: 21px;
  background:
    radial-gradient(circle at 3px 4px, #8d3b35 0 2px, transparent 2px),
    repeating-conic-gradient(#fff 0 25%, #d3d3d3 0 50%) 0 0 / 6px 6px;
`;

const LayerName = styled.span`
  padding-left: ${(p) => (p.$group ? 4 : 2)}px;
`;

const LayerActions = styled.div`
  display: flex;
  align-items: center;
  justify-content: flex-end;
  gap: 9px;
  height: 14px;
  padding-right: 17px;
  border-top: 1px solid #464646;
  color: #b4b4b4;
`;

const Watermark = styled.div`
  position: absolute;
  right: 10px;
  bottom: 14px;
  color: #232323;
  font-family: ${narrow};
  font-size: 41px;
  font-weight: 300;
  line-height: 44px;

  span { color: #7f9a14; }
`;

const layers = [
  { name: 'Layer 2' },
  { name: 'Layer 3', thumb: true },
  { name: 'ciita0000000...<<<<<<<<0 d' },
  { name: '1aa', hidden: true },
  { name: '169' },
  { name: 'm' },
  { name: '129 2s' },
  { name: '01.01.1990' },
];

const PropertiesPanel = () => (
  <>
    <PanelTabs>
      {['Swatc', 'Gradi', 'Patter', 'Histor', 'Actio'].map((t) => <PanelTab key={t} $width={t === 'Actio' ? 22 : 23}>{t}</PanelTab>)}
      <PanelTab $width={42} $active>Properties</PanelTab>
      <Icon name="menu" size={7} />
    </PanelTabs>
    <DocumentRow>
      <ToggleButton $on aria-label="Document"><Icon name="page" size={11} /></ToggleButton>
      Document
    </DocumentRow>
    <Scroller>
      <div>
        <Section $bottom={3}>
          <SectionTitle><Icon name="chevron" size={7} />Canvas</SectionTitle>
          <SizeGrid>
            <LinkCell aria-label="Link width and height"><Icon name="link" size={11} /></LinkCell>
            <label htmlFor="w">W</label><Field id="w" defaultValue="2232 px" />
            <label htmlFor="x">X</label><Field id="x" defaultValue="0 px" disabled />
            <label htmlFor="h">H</label><Field id="h" defaultValue="2854 px" />
            <label htmlFor="y">Y</label><Field id="y" defaultValue="0 px" disabled />
          </SizeGrid>
          <FormLine $tall>
            <span />
            <Group $gap={2}>
              <ToggleButton $on aria-label="Portrait"><Icon name="portrait" size={11} /></ToggleButton>
              <ToggleButton aria-label="Landscape"><Icon name="landscape" size={10} /></ToggleButton>
            </Group>
          </FormLine>
          <Resolution>Resolution: 250 pixels/inch</Resolution>
          <FormLine>
            <label htmlFor="mode">Mode</label>
            <Select id="mode" label="Mode" value="RGB Color" width={82} />
          </FormLine>
          <FormLine>
            <span />
            <Select label="Bit depth" value="16 Bits/Channel" width={82} />
          </FormLine>
          <FormLine>
            <label htmlFor="fill">Fill</label>
            <Group $gap={3}>
              <FillBox />
              <Select id="fill" label="Fill" value="Transparent" width={68} />
            </Group>
          </FormLine>
        </Section>
        <Section>
          <SectionTitle><Icon name="chevron" size={7} />Rulers &amp; Grids</SectionTitle>
          <ButtonLine>
            <ToggleButton $on aria-label="Rulers"><Icon name="ruler" size={11} /></ToggleButton>
            <ToggleButton aria-label="Grid"><Icon name="grid" size={11} /></ToggleButton>
            <ToggleButton aria-label="Pixel grid"><Icon name="pixelGrid" size={11} /></ToggleButton>
            <Select label="Units" value="Pixels" width={47} />
          </ButtonLine>
        </Section>
        <Section>
          <SectionTitle><Icon name="chevron" size={7} />Guides</SectionTitle>
          <ButtonLine>
            <ToggleButton $on aria-label="Guides"><Icon name="guides" size={11} /></ToggleButton>
            <ToggleButton aria-label="Lock guides"><Icon name="guideLock" size={11} /></ToggleButton>
            <ToggleButton $on aria-label="Smart guides"><Icon name="guideSmart" size={11} /></ToggleButton>
            <Select label="Guide style" value="" width={47} before={<LinePreview />} />
          </ButtonLine>
        </Section>
        <Section $bottom={11}>
          <SectionTitle><Icon name="chevron" size={7} />Quick Actions</SectionTitle>
        </Section>
      </div>
      <Bar thumb={222} gap={3} />
    </Scroller>
  </>
);

const Layers = () => (
  <LayersPanel>
    <PanelTabs>
      <PanelTab $width={30} $active>Layers</PanelTab>
      <Icon name="menu" size={7} />
    </PanelTabs>
    <LayerLine $gap={8} $height={23} $top={3}>
      <Select label="Filter" value="Kind" width={53} before={<Icon name="zoom" size={7} />} />
      <Icon name="image" size={8} />
      <Icon name="adjust" size={8} />
      <Glyph $size={10} $bold>T</Glyph>
      <Icon name="shape" size={8} />
      <Icon name="smart" size={8} />
      <FilterSwitch aria-label="Filtering on" />
    </LayerLine>
    <LayerLine $gap={5} $height={19} $dim>
      <Select label="Blend mode" value="Normal" width={79} dim />
      <label htmlFor="opacity">Opacity:</label>
      <Percent id="opacity" defaultValue="100%" disabled />
      <Icon name="chevron" size={5} />
    </LayerLine>
    <LayerLine $gap={6} $height={20} $dim>
      Lock:
      <Icon name="checker" size={8} />
      <Icon name="brush" size={8} />
      <Icon name="move" size={8} />
      <Icon name="artboard" size={8} />
      <Icon name="lock" size={8} />
      <FillLabel htmlFor="layerFill">Fill:</FillLabel>
      <Percent id="layerFill" defaultValue="100%" disabled />
      <Icon name="chevron" size={5} />
    </LayerLine>
    <Scroller $grow>
      <LayerList>
        <LayerRow $group>
          <EyeCell aria-label="Show group"><Icon name="eye" size={8} /></EyeCell>
          <ThumbCell $group>
            <Icon name="chevron" size={6} />
            <Icon name="folder" size={9} />
          </ThumbCell>
          <LayerName $group>edite text</LayerName>
        </LayerRow>
        {layers.map((l) => (
          <LayerRow key={l.name}>
            <EyeCell aria-label="Show layer"><Icon name={l.hidden ? 'eyeOff' : 'eye'} size={8} /></EyeCell>
            <ThumbCell>{l.thumb ? <Thumb /> : <Glyph $size={15}>T</Glyph>}</ThumbCell>
            <LayerName>{l.name}</LayerName>
          </LayerRow>
        ))}
      </LayerList>
      <Bar thumb={66} gap={13} />
    </Scroller>
    <LayerActions>
      <Icon name="chain" size={9} />
      <Glyph $italic $size={9}>fx</Glyph>
      <Icon name="mask" size={8} />
      <Icon name="adjust" size={8} />
      <Icon name="folder" size={8} />
      <Icon name="add" size={8} />
      <Icon name="trash" size={8} />
    </LayerActions>
  </LayersPanel>
);

const menus = ['File', 'Edit', 'Image', 'Layer', 'Type', 'Select', 'Filter', '3D', 'View', 'Window', 'Help'];

export default function App() {
  return (
    <Page>
      <GlobalStyle />
      <MenuBar>
        <PsBadge>Ps</PsBadge>
        {menus.map((m) => <MenuItem key={m}>{m}</MenuItem>)}
      </MenuBar>
      <DragHandle />
      <OptionsBar>
        <Icon name="home" size={11} />
        <Divider $space={1} />
        <Icon name="move" size={10} />
        <Icon name="chevron" size={5} />
        <Check><input type="checkbox" defaultChecked />Auto-Select:</Check>
        <Select label="Auto-select target" value="Layer" width={35} />
        <Check><input type="checkbox" defaultChecked />Show Transform Controls</Check>
        <Divider $space={1} />
        <Group $gap={7} $dim>
          <Icon name="alignLeft" size={9} />
          <Icon name="alignCenter" size={9} />
          <Icon name="alignRight" size={9} />
          <Divider />
          <Icon name="distribute" size={9} />
          <Divider />
          <Icon name="alignTop" size={9} />
          <Icon name="alignMiddle" size={9} />
          <Icon name="alignBottom" size={9} />
          <Divider />
          <Icon name="distributeH" size={9} />
        </Group>
        <Divider />
        <Icon name="dots" size={10} />
        <Divider />
        <Group $gap={6} $dim>
          <ModeLabel>3D Mode:</ModeLabel>
          <Icon name="orbit" />
          <Icon name="roll" />
          <Icon name="pan" />
          <Icon name="slide" />
          <Icon name="camera" />
        </Group>
      </OptionsBar>
      <Main>
        <ToolBar />
        <DocumentArea>
          <TabBar>
            <DocTab>Italy id.psd @ 20.7% (RGB/16) * <span>×</span></DocTab>
          </TabBar>
          <Workspace>
            <RulerCorner />
            <RulerX>
              <RulerXTrack>
                {marksX.map((m, i) => <MarkX key={i} $wide={m > 999}>{m}</MarkX>)}
              </RulerXTrack>
            </RulerX>
            <span />
            <RulerY>
              <RulerYTrack>
                {marksY.map((m, i) => <MarkY key={i} $wide={m > 999}>{m}</MarkY>)}
              </RulerYTrack>
            </RulerY>
            <Canvas>
              <Artboard />
              <GuideV $at={287} />
              <GuideV $at={536} />
              <GuideH $at={137} />
              <GuideH $at={501} />
              <MemberCard />
            </Canvas>
          </Workspace>
          <StatusBar>
            <span>20.66%</span>
            <span>2232 px x 2854 px (250 ppi)</span>
            <span>〉</span>
          </StatusBar>
        </DocumentArea>
        <Dock>
          <PanelCap $align="flex-end"><Icon name="collapse" size={6} /></PanelCap>
          <DockGroup><Icon name="brushes" size={13} /><Icon name="brushSettings" size={13} /></DockGroup>
          <DockGroup><Glyph $sans $size={12}>A|</Glyph><Glyph $sans $bold $size={12}>¶</Glyph></DockGroup>
          <DockGroup><Glyph $italic $bold $size={15}>A</Glyph></DockGroup>
          <DockGroup><Icon name="cube" size={12} /></DockGroup>
        </Dock>
        <Panels>
          <PanelCap $align="flex-end"><Icon name="expand" size={6} /></PanelCap>
          <PropertiesPanel />
          <Layers />
        </Panels>
      </Main>
      <Watermark>EKOGEA.<span>ORG</span></Watermark>
    </Page>
  );
}
